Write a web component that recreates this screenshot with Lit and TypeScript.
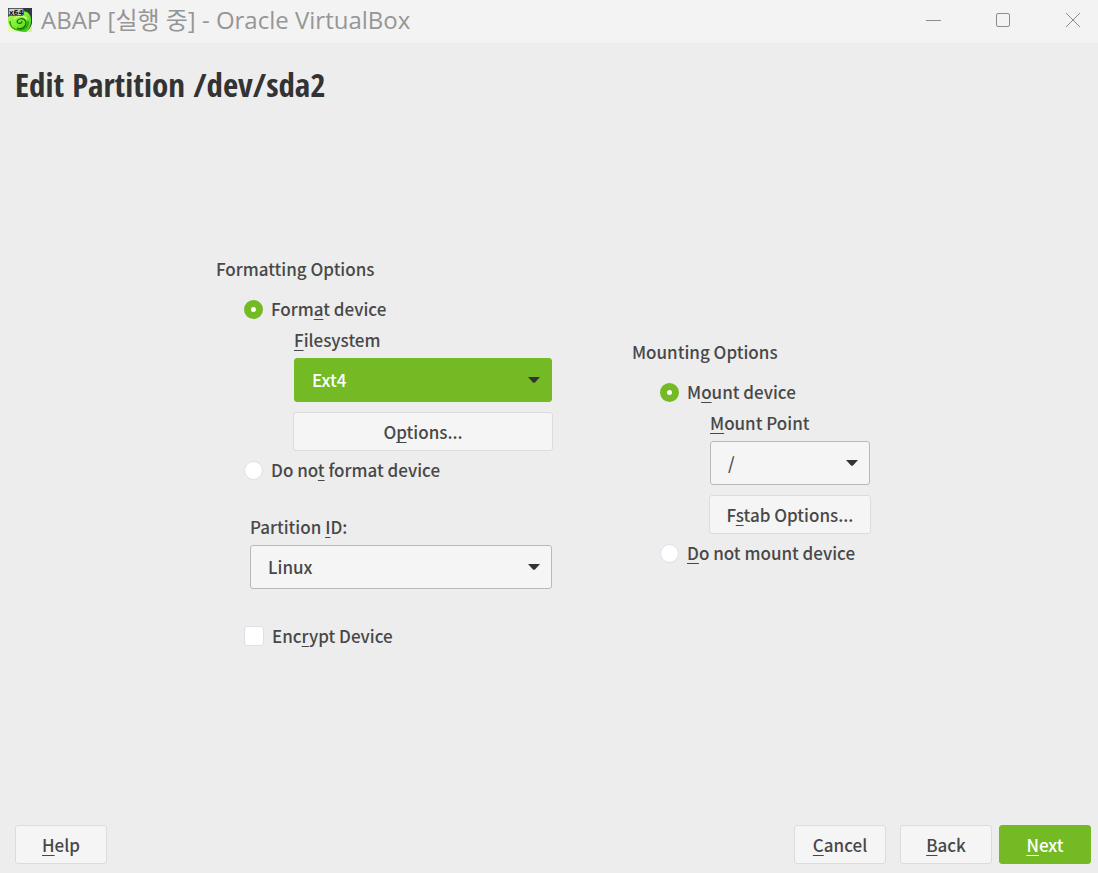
import { LitElement, html, svg, css } from "lit";
import { customElement, property, state } from "lit/decorators.js";

/** Renders a caption whose accelerator letter is marked with "&". */
const caption = (text: string) => {
  const at = text.indexOf("&");
  if (at < 0) return html`${text}`;
  return html`${text.slice(0, at)}<span class="key">${text[at + 1]}</span>${text.slice(at + 2)}`;
};

const shared = css`
  * {
    box-sizing: border-box;
  }
  .key {
    text-decoration: underline;
    text-decoration-thickness: 1px;
    text-underline-offset: 3px;
    text-decoration-skip-ink: none;
  }
  button,
  select {
    font: inherit;
    color: inherit;
    margin: 0;
  }
`;

@customElement("window-bar")
class WindowBar extends LitElement {
  @property() caption = "";

  static styles = [
    shared,
    css`
      :host {
        display: flex;
        align-items: center;
        height: 43px;
        padding-left: 8px;
        padding-bottom: 3px;
        background: #f3f3f3;
        color: #919191;
      }
      .logo {
        width: 24px;
        height: 24px;
        overflow: visible;
      }
      .caption {
        flex: 1;
        margin-left: 9px;
        font-family: "Open Sans", "Noto Sans CJK KR", sans-serif;
        font-size: 24px;
        font-weight: 400;
        line-height: 40px;
        color: #969696;
        white-space: nowrap;
      }
      button {
        display: grid;
        place-items: center;
        width: 70px;
        height: 40px;
        padding: 0;
        border: 0;
        background: none;
      }
      .buttons {
        display: flex;
        margin-right: -10px;
      }
      .glyph {
        width: 16px;
        height: 16px;
        fill: none;
        stroke: #8c8c8c;
      }
      .badge {
        font: bold 7px "DejaVu Sans", sans-serif;
      }
    `,
  ];

  render() {
    return html`
      <svg class="logo" viewBox="0 0 24 24" aria-hidden="true">
        <defs>
          <linearGradient id="g" x1="0" y1="0" x2="1" y2="1">
            <stop offset="0" stop-color="#b9f56a" />
            <stop offset="0.5" stop-color="#7cf02c" />
            <stop offset="1" stop-color="#35c412" />
          </linearGradient>
        </defs>
        <rect width="24" height="24" fill="#2e3a40" />
        <path d="M0 9C6 4 14 2 19 4c5 3 6 12 0 20H1L0 22z" fill="url(#g)" />
        <path d="M0 14c2 6 8 9 15 10H0z" fill="#e9f9b4" />
        <path d="M18 24c3-2 5-5 6-9v9z" fill="#d6f2a0" />
        <path d="M2 13c0 6 4 9 9 9 6 0 10-4 9-9" fill="none" stroke="#2aa512" stroke-width="1.500" />
        <path
          d="M9 20c5 2 9-1 9-5 0-3-3-5-6-4-2 0-4 3-2 4s4 0 4-2"
          fill="none" stroke="#116b0b" stroke-width="1.200"
        />
        <path d="M6 11c4-4 10-4 13 0" fill="none" stroke="#c8ff7a" stroke-width="1.500" />
        <rect x="0.500" y="0.500" width="15" height="7" rx="1.500" fill="#c9ced1" stroke="#555e63" />
        <text class="badge" x="1" y="6.500" fill="#111">x64</text>
      </svg>
      <div class="caption">${this.caption}</div>
      <div class="buttons">
        <button aria-label="Minimize">
          <svg class="glyph" viewBox="0 0 16 16"><path d="M1 8.500h15" /></svg>
        </button>
        <button aria-label="Maximize">
          <svg class="glyph" viewBox="0 0 16 16"><rect x="1.500" y="1.500" width="13" height="13" rx="1.500" /></svg>
        </button>
        <button aria-label="Close">
          <svg class="glyph" viewBox="0 0 16 16"><path d="M1 1l14 14M15 1L1 15" /></svg>
        </button>
      </div>
    `;
  }
}

@customElement("app-root")
class AppRoot extends LitElement {
  @state() private format = true;
  @state() private mount = true;

  static styles = [
    shared,
    css`
      :host {
        display: flex;
        flex-direction: column;
        min-height: 100vh;
        background: #ededed;
        color: #484848;
        font-family: "Noto Sans CJK KR", sans-serif;
        font-size: 17px;
        font-weight: 500;
        line-height: 24px;
      }
      h1 {
        margin: 0;
        padding: 21px 15px 0;
        font-family: "Open Sans Condensed", "Noto Sans Condensed", "Noto Sans CJK KR", sans-serif;
        font-size: 33px;
        line-height: 42px;
        font-weight: 700;
        color: #333;
      }
      main {
        flex: 1;
        display: flex;
        flex-wrap: wrap;
        justify-content: center;
        align-items: center;
        gap: 24px 79px;
        padding: 0 11px 26px 0;
      }
      fieldset {
        min-width: 0;
        margin: 0;
        padding: 0;
        border: 0;
      }
      legend {
        padding: 0;
        margin-bottom: 16px;
      }
      .formatting {
        width: 337px;
      }
      .mounting {
        width: 239px;
      }
      .choice {
        display: flex;
        align-items: center;
        gap: 8px;
        margin-left: 28px;
      }
      .choice input {
        appearance: none;
        flex: none;
        width: 19px;
        height: 19px;
        margin: 0;
        border: 1px solid #dde0ea;
        background: #fff;
      }
      .choice input[type="radio"] {
        border-radius: 50%;
      }
      .choice input[type="checkbox"] {
        width: 20px;
        height: 20px;
        border-radius: 3px;
      }
      .choice input[type="radio"]:checked {
        border: 7px solid #73ba25;
      }
      .nested {
        display: flex;
        flex-direction: column;
        margin: 7px 0 7px 77px;
      }
      .nested label,
      .partition label {
        margin-left: 1px;
        margin-bottom: 6px;
      }
      .nested .combo {
        margin: 0 1px 10px;
      }
      .partition {
        display: flex;
        flex-direction: column;
        margin: 33px 1px 35px 34px;
      }
      .partition label {
        margin-left: 0;
      }
      .combo {
        display: grid;
        align-items: center;
      }
      .combo select,
      .combo svg {
        grid-area: 1 / 1;
      }
      .combo select {
        appearance: none;
        width: 100%;
        height: 44px;
        padding: 0 40px 0 17px;
        border: 1px solid #b9b9b9;
        border-radius: 3px;
        background: #f5f5f5;
      }
      .combo .active {
        border-color: #73ba25;
        background: #73ba25;
        color: #fff;
      }
      .combo svg {
        justify-self: end;
        width: 12px;
        height: 6px;
        margin-right: 12px;
        fill: #333;
        pointer-events: none;
      }
      .push {
        height: 39px;
        padding: 0 8px;
        border: 1px solid #dcdcdc;
        border-radius: 3px;
        background: #f5f5f5;
      }
      footer {
        display: flex;
        gap: 14px;
        padding: 0 7px 9px 15px;
      }
      footer .push {
        width: 92px;
      }
      footer .push:first-child {
        margin-right: auto;
      }
      footer .primary {
        margin-left: -7px;
        border-color: #73ba25;
        background: #73ba25;
        color: #fff;
      }
    `,
  ];

  private combo(id: string, value: string, active = false) {
    return html`
      <div class="combo">
        <select id=${id} class=${active ? "active" : ""}>
          <option>${value}</option>
        </select>
        <svg viewBox="0 0 12 6" aria-hidden="true">${svg`<path d="M0 0h12L7 5.500Q6 6 5 5.500z" />`}</svg>
      </div>
    `;
  }

  private radio(group: string, text: string, checked: boolean, pick: () => void) {
    return html`
      <label class="choice">
        <input type="radio" name=${group} .checked=${checked} @change=${pick} />
        <span>${caption(text)}</span>
      </label>
    `;
  }

  render() {
    return html`
      <window-bar caption="ABAP [실행 중] - Oracle VirtualBox"></window-bar>
      <h1>Edit Partition /dev/sda2</h1>
      <main>
        <div class="formatting">
          <fieldset>
            <legend>Formatting Options</legend>
            ${this.radio("format", "Form&at device", this.format, () => (this.format = true))}
            <div class="nested">
              <label for="filesystem">${caption("&Filesystem")}</label>
              ${this.combo("filesystem", "Ext4", true)}
              <button class="push">${caption("O&ptions...")}</button>
            </div>
            ${this.radio("format", "Do no&t format device", !this.format, () => (this.format = false))}
          </fieldset>
          <div class="partition">
            <label for="partition-id">${caption("Partition &ID:")}</label>
            ${this.combo("partition-id", "Linux")}
          </div>
          <label class="choice">
            <input type="checkbox" />
            <span>${caption("Enc&rypt Device")}</span>
          </label>
        </div>
        <fieldset class="mounting">
          <legend>Mounting Options</legend>
          ${this.radio("mount", "M&ount device", this.mount, () => (this.mount = true))}
          <div class="nested">
            <label for="mount-point">${caption("&Mount Point")}</label>
            ${this.combo("mount-point", "/")}
            <button class="push">${caption("F&stab Options...")}</button>
          </div>
          ${this.radio("mount", "&Do not mount device", !this.mount, () => (this.mount = false))}
        </fieldset>
      </main>
      <footer>
        <button class="push">${caption("&Help")}</button>
        <button class="push">${caption("&Cancel")}</button>
        <button class="push">${caption("&Back")}</button>
        <button class="push primary">${caption("&Next")}</button>
      </footer>
    `;
  }
}
